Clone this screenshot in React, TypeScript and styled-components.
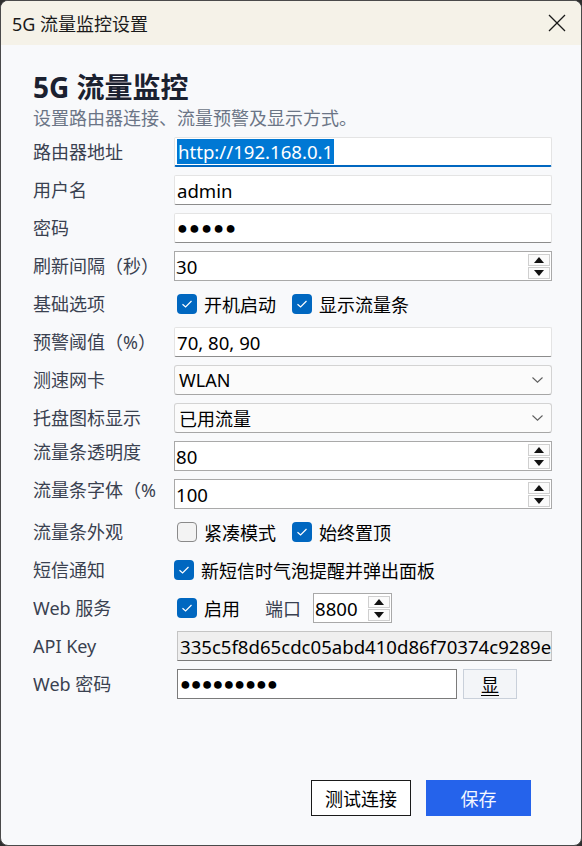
import React from "react";
import styled, { createGlobalStyle, css } from "styled-components";

const GlobalStyle = createGlobalStyle`
  html, body { margin: 0; padding: 0; background: #2e2e2e; }
  body { font-family: "Noto Sans", "Noto Sans CJK SC", sans-serif; }
  #root { width: 582px; height: 846px; }
  * { box-sizing: border-box; }
`;

const Window = styled.div`
  width: 582px;
  height: 846px;
  border: 1px solid #4a4a4a;
  border-radius: 8px;
  overflow: hidden;
  display: flex;
  flex-direction: column;
  background: #f8f9fb;
`;

const TitleBar = styled.div`
  height: 44px;
  flex: none;
  background: #f5f2e8;
  display: flex;
  align-items: center;
  justify-content: space-between;
  padding: 0 15px 0 11px;
`;

const TitleText = styled.div`
  font-size: 18px;
  color: #1a1a1a;
`;

const CloseIcon = styled.svg`
  width: 18px;
  height: 18px;
  display: block;
`;

const Body = styled.div`
  flex: 1;
  display: flex;
  flex-direction: column;
  padding: 25px 29px 29px 32px;
`;

const Heading = styled.h1`
  margin: 0;
  font-size: 28px;
  line-height: 34px;
  font-weight: 700;
  color: #1b2130;
`;

const Subtitle = styled.div`
  margin-top: 2px;
  font-size: 18px;
  line-height: 24px;
  color: #6b7586;
`;

const Form = styled.div`
  margin-top: 7px;
  display: grid;
  grid-template-columns: 141px 1fr;
  grid-auto-rows: 30px;
  row-gap: 8px;
`;

const Label = styled.div<{ $raised?: boolean }>`
  font-size: 18px;
  line-height: 24px;
  color: #3a4150;
  white-space: nowrap;
  overflow: hidden;
  align-self: center;
  ${(p) =>
    p.$raised &&
    css`
      align-self: start;
      line-height: 22px;
    `}
`;

const fieldBase = css`
  height: 30px;
  display: flex;
  align-items: center;
  font-size: 18.6px;
  color: #000;
  white-space: nowrap;
  overflow: hidden;
`;

const TextField = styled.div<{ $focused?: boolean }>`
  ${fieldBase};
  background: #fff;
  border: 1px solid #e4e4e4;
  border-bottom: 1px solid #8c8c8c;
  border-radius: 2px;
  padding-left: 2px;
  ${(p) =>
    p.$focused &&
    css`
      border-bottom: 2px solid #0067c0;
    `}
`;

const Selected = styled.span`
  background: #0078d4;
  color: #fff;
  line-height: 25px;
  padding: 0 1px;
`;

const SpinBox = styled.div<{ $width?: number }>`
  ${fieldBase};
  background: #fff;
  border: 1px solid #a9a9a9;
  padding-left: 1px;
  justify-content: space-between;
  ${(p) => p.$width && css`width: ${p.$width}px;`}
`;

const SpinButtons = styled.div`
  display: flex;
  flex-direction: column;
  gap: 1px;
  margin-right: 1px;
`;

const SpinBtn = styled.div`
  width: 22px;
  height: 12px;
  border: 1px solid #cfcfcf;
  background: #fbfbfb;
  display: flex;
  align-items: center;
  justify-content: center;
`;

const Triangle = styled.span<{ $down?: boolean }>`
  width: 0;
  height: 0;
  border-left: 5px solid transparent;
  border-right: 5px solid transparent;
  ${(p) =>
    p.$down
      ? css`border-top: 6px solid #111;`
      : css`border-bottom: 6px solid #111;`}
`;

const SelectBox = styled.div`
  ${fieldBase};
  font-size: 18px;
  background: #fbfbfb;
  border: 1px solid #d3d3d3;
  border-bottom: 1px solid #a6a6a6;
  border-radius: 3px;
  padding: 0 8px 0 4px;
  justify-content: space-between;
`;

const Chevron = styled.svg`
  width: 11px;
  height: 6px;
  display: block;
`;

const ReadField = styled.div`
  ${fieldBase};
  margin-left: 3px;
  background: #efefef;
  border: 1px solid #c4c4c4;
  border-bottom: 1px solid #7a7a7a;
  padding-left: 2px;
`;

const Dots = styled.span<{ $spacing?: number }>`
  font-family: "Liberation Sans", "DejaVu Sans", sans-serif;
  font-size: 18px;
  letter-spacing: ${(p) => p.$spacing ?? 0}px;
`;

const Row = styled.div<{ $indent?: number }>`
  display: flex;
  align-items: center;
  margin-left: ${(p) => p.$indent ?? 0}px;
`;

const CheckItem = styled.div<{ $tight?: boolean }>`
  display: flex;
  align-items: center;
  gap: 7px;
  margin-right: ${(p) => (p.$tight ? 0 : 16)}px;
  font-size: 18px;
  color: #000;
  white-space: nowrap;
`;

const Box = styled.span<{ $checked?: boolean }>`
  width: 20px;
  height: 20px;
  border-radius: 4px;
  display: flex;
  align-items: center;
  justify-content: center;
  flex: none;
  ${(p) =>
    p.$checked
      ? css`background: #0067c0;`
      : css`
          background: #f3f3f3;
          border: 1px solid #8a8a8a;
        `}
`;

const InlineLabel = styled.span`
  font-size: 18px;
  color: #3a4150;
  margin: 0 12px 0 25px;
  white-space: nowrap;
`;

const DarkField = styled.div`
  ${fieldBase};
  width: 280px;
  background: #fff;
  border: 1px solid #7b7b7b;
  padding-left: 2px;
`;

const ShowButton = styled.div`
  width: 54px;
  height: 30px;
  margin-left: 6px;
  background: #f3f5f8;
  border: 1px solid #c9d0da;
  display: flex;
  align-items: center;
  justify-content: center;
  font-size: 18px;
  color: #000;
  text-decoration: underline;
  text-underline-offset: 3px;
`;

const Footer = styled.div`
  margin-top: auto;
  display: flex;
  justify-content: flex-end;
  gap: 15px;
  padding-right: 21px;
`;

const Button = styled.div<{ $primary?: boolean; $width: number }>`
  width: ${(p) => p.$width}px;
  height: 36px;
  display: flex;
  align-items: center;
  justify-content: center;
  font-size: 18px;
  ${(p) =>
    p.$primary
      ? css`
          background: #2563eb;
          color: #f4f7ff;
        `
      : css`
          background: #fff;
          color: #000;
          border: 1px solid #1a1a1a;
        `}
`;

const Check = () => (
  <svg width="14" height="14" viewBox="0 0 14 14">
    <polyline points="2.5,7.2 5.6,10 11.5,4" fill="none" stroke="#fff" strokeWidth="1.2" />
  </svg>
);

const CheckBox = ({ checked, label, tight }: { checked?: boolean; label: string; tight?: boolean }) => (
  <CheckItem $tight={tight}>
    <Box $checked={checked}>{checked && <Check />}</Box>
    {label}
  </CheckItem>
);

const Spin = ({ value, width }: { value: string; width?: number }) => (
  <SpinBox $width={width}>
    <span>{value}</span>
    <SpinButtons>
      <SpinBtn>
        <Triangle />
      </SpinBtn>
      <SpinBtn>
        <Triangle $down />
      </SpinBtn>
    </SpinButtons>
  </SpinBox>
);

const Select = ({ value }: { value: string }) => (
  <SelectBox>
    <span>{value}</span>
    <Chevron viewBox="0 0 11 6">
      <polyline points="0.5,0.5 5.5,5.2 10.5,0.5" fill="none" stroke="#606060" strokeWidth="1.1" />
    </Chevron>
  </SelectBox>
);

export default function App() {
  return (
    <>
      <GlobalStyle />
      <Window>
        <TitleBar>
          <TitleText>5G 流量监控设置</TitleText>
          <CloseIcon viewBox="0 0 18 18">
            <line x1="1" y1="1" x2="17" y2="17" stroke="#1a1a1a" strokeWidth="1.3" />
            <line x1="17" y1="1" x2="1" y2="17" stroke="#1a1a1a" strokeWidth="1.3" />
          </CloseIcon>
        </TitleBar>
        <Body>
          <Heading>5G 流量监控</Heading>
          <Subtitle>设置路由器连接、流量预警及显示方式。</Subtitle>
          <Form>
            <Label>路由器地址</Label>
            <TextField $focused>
              <Selected>http://192.168.0.1</Selected>
            </TextField>

            <Label>用户名</Label>
            <TextField>admin</TextField>

            <Label>密码</Label>
            <TextField>
              <Dots $spacing={1.2}>●●●●●</Dots>
            </TextField>

            <Label>刷新间隔（秒）</Label>
            <Spin value="30" />

            <Label>基础选项</Label>
            <Row $indent={3}>
              <CheckBox checked label="开机启动" />
              <CheckBox checked label="显示流量条" />
            </Row>

            <Label>预警阈值（%）</Label>
            <TextField>70, 80, 90</TextField>

            <Label>测速网卡</Label>
            <Select value="WLAN" />

            <Label>托盘图标显示</Label>
            <Select value="已用流量" />

            <Label $raised>流量条透明度</Label>
            <Spin value="80" />

            <Label $raised>流量条字体（%</Label>
            <Spin value="100" />

            <Label>流量条外观</Label>
            <Row $indent={3}>
              <CheckBox label="紧凑模式" />
              <CheckBox checked label="始终置顶" />
            </Row>

            <Label>短信通知</Label>
            <Row>
              <CheckBox checked label="新短信时气泡提醒并弹出面板" />
            </Row>

            <Label>Web 服务</Label>
            <Row $indent={3}>
              <CheckBox checked tight label="启用" />
              <InlineLabel>端口</InlineLabel>
              <Spin value="8800" width={79} />
            </Row>

            <Label>API Key</Label>
            <ReadField>335c5f8d65cdc05abd410d86f70374c9289e1b7a</ReadField>

            <Label>Web 密码</Label>
            <Row $indent={3}>
              <DarkField>
                <Dots>●●●●●●●●●</Dots>
              </DarkField>
              <ShowButton>显</ShowButton>
            </Row>
          </Form>
          <Footer>
            <Button $width={100}>测试连接</Button>
            <Button $primary $width={105}>
              保存
            </Button>
          </Footer>
        </Body>
      </Window>
    </>
  );
}
